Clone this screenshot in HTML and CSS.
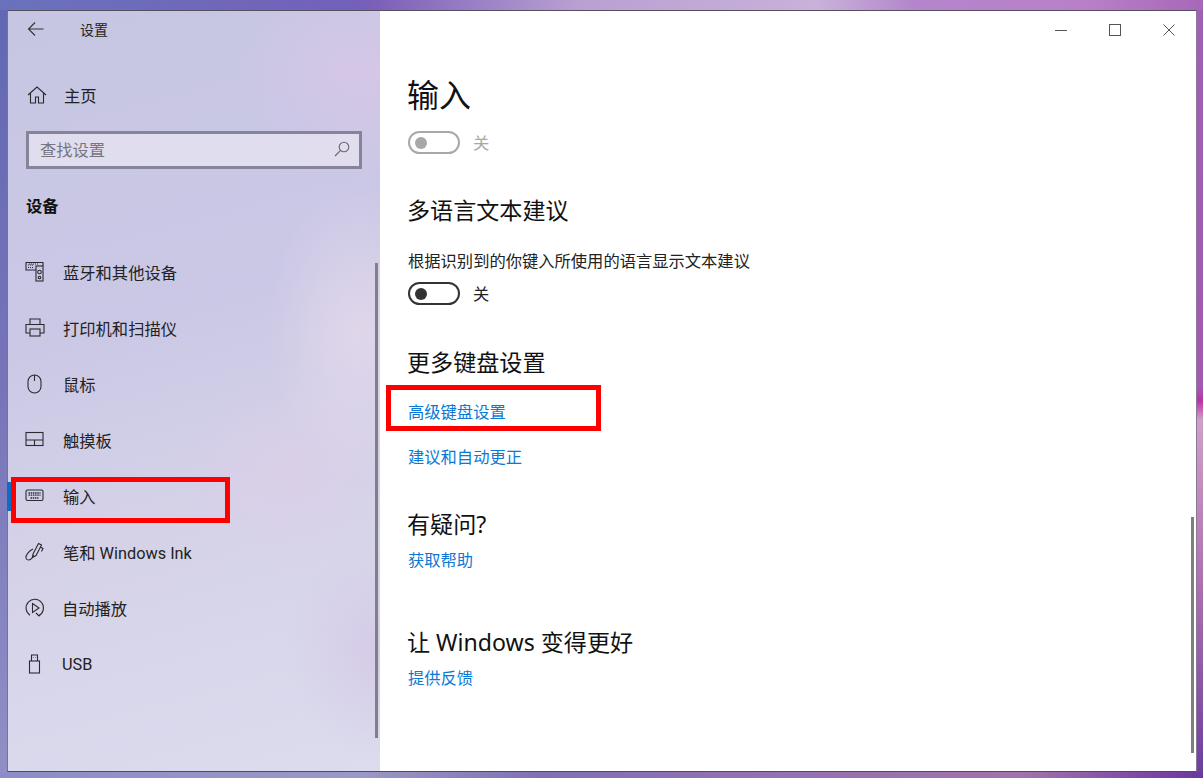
FILE: index.html
```html
<!DOCTYPE html>
<html lang="zh-CN">
<head>
<meta charset="utf-8">
<title>设置</title>
<link rel="stylesheet" href="styles.css">
</head>
<body>
<div class="window">
  <aside class="sidebar">
    <div class="appbar">
      <svg class="back" width="18" height="16" viewBox="0 0 18 16"><path d="M16.500 8H1.500M8 1.500 1.500 8 8 14.500"/></svg>
      <span class="apptitle">设置</span>
    </div>
    <div class="navrow home">
      <svg class="ico" width="20" height="20" viewBox="0 0 20 20"><path d="M1 10 10 2l9 8M3.500 8v10h5v-6h3v6h5V8"/></svg>
      <span>主页</span>
    </div>
    <div class="search">
      <span class="ph">查找设置</span>
      <svg class="ico mag" width="16" height="16" viewBox="0 0 16 16"><circle cx="10" cy="6" r="4.800"/><path d="M6.600 9.400 1 15"/></svg>
    </div>
    <div class="group">设备</div>
    <nav class="nav">
      <div class="navrow">
        <svg class="ico" width="20" height="20" viewBox="0 0 20 20"><path d="M11 8H1V0.500h17V3M18 0.500V4"/><path d="M3 3h5M3 5.500h5M4 2h10" class="thin"/><rect x="11" y="4" width="7" height="15"/><circle cx="14.500" cy="10" r="1.800"/><circle cx="14.500" cy="15.500" r="1.300"/></svg>
        <span>蓝牙和其他设备</span>
      </div>
      <div class="navrow">
        <svg class="ico" width="20" height="20" viewBox="0 0 20 20"><path d="M5 6V1h10v5M5 15H1V6.500h18V15h-4"/><rect x="5" y="11" width="10" height="7"/></svg>
        <span>打印机和扫描仪</span>
      </div>
      <div class="navrow">
        <svg class="ico" width="20" height="20" viewBox="0 0 20 20"><rect x="3" y="1" width="13" height="18" rx="6.500"/><path d="M9.500 1v6"/></svg>
        <span>鼠标</span>
      </div>
      <div class="navrow">
        <svg class="ico" width="20" height="20" viewBox="0 0 20 20"><rect x="1" y="2.500" width="17" height="13"/><path d="M1 10h17M9.500 10v5.500"/></svg>
        <span>触摸板</span>
      </div>
      <div class="navrow active">
        <span class="marker"></span>
        <svg class="ico" width="20" height="20" viewBox="0 0 20 20"><rect x="1" y="4" width="17" height="10.500" rx="1.500"/><path d="M3.500 7h12M3.500 9.200h12M5.500 12h8" class="dash"/></svg>
        <span>输入</span>
      </div>
      <div class="navrow">
        <svg class="ico" width="20" height="20" viewBox="0 0 20 20"><path d="M8 12 13.500 1.500l3 1.500L11 13.500l-3.500 2zM15.500 5l2.500 1.500-1.500 3"/><path d="M8 7C4 9 .5 13 1 16c.4 2.500 4 3 6 0 1-1.500 1.500-3 1.500-3"/></svg>
        <span>笔和 Windows Ink</span>
      </div>
      <div class="navrow">
        <svg class="ico" width="20" height="20" viewBox="0 0 20 20"><path d="M5 17.200A8.700 8.700 0 1 1 14 17.500M11 15l3 3 3-3"/><path d="M7.500 5.500 14 10l-6.500 4.500z"/></svg>
        <span class="nudge">自动播放</span>
      </div>
      <div class="navrow">
        <svg class="ico" width="20" height="20" viewBox="0 0 20 20"><rect x="4.500" y="7" width="10" height="12"/><path d="M6.500 7V1h6v6M8.500 3.500h.5M10.500 3.500h.5"/></svg>
        <span class="nudge">USB</span>
      </div>
    </nav>
  </aside>
  <main class="content">
    <div class="controls">
      <div class="ctl"><svg width="12" height="12" viewBox="0 0 12 12"><path d="M0 6.500h12"/></svg></div>
      <div class="ctl"><svg width="12" height="12" viewBox="0 0 12 12"><rect x=".5" y=".5" width="11" height="11"/></svg></div>
      <div class="ctl"><svg width="12" height="12" viewBox="0 0 12 12"><path d="M.5.500l11 11M11.500.500l-11 11"/></svg></div>
    </div>
    <div class="body">
      <h1>输入</h1>
      <div class="toggle off-disabled"><span class="track"><i></i></span><span class="state">关</span></div>
      <h2 class="h-first">多语言文本建议</h2>
      <p class="desc">根据识别到的你键入所使用的语言显示文本建议</p>
      <div class="toggle"><span class="track"><i></i></span><span class="state">关</span></div>
      <h2 class="h-more">更多键盘设置</h2>
      <a class="link l1">高级键盘设置</a>
      <a class="link l2">建议和自动更正</a>
      <h2 class="h-q">有疑问?</h2>
      <a class="link l3">获取帮助</a>
      <h2 class="h-win">让 Windows 变得更好</h2>
      <a class="link l3">提供反馈</a>
    </div>
  </main>
  <div class="scroll s-left"></div>
  <div class="scroll s-right"></div>
</div>
<div class="redbox r-nav"></div>
<div class="redbox r-link"></div>
</body>
</html>
```
FILE: styles.css
```css
* { box-sizing: border-box; }
html, body { height: 100%; }
body {
  margin: 0;
  padding: 10px 6px 6px 7px;
  overflow: hidden;
  position: relative;
  font-family: "Noto Sans", "Noto Sans CJK SC", sans-serif;
  color: #1a1a1a;
  background-color: #8a70b8;
  background-image:
    linear-gradient(90deg, #6a72bc 0, #7460ba 30%, #7b5fb8 31%, #b8a0d2 48%, #c8b2da 68%, #b485cc 76%, #b980c8 90%, #a868b8 100%),
    linear-gradient(90deg, #8e8cc6 0, #9a98c6 30%, #8070b2 45%, #9070b2 60%, #a272ac 85%, #7a44a2 96%, #6a38a0 100%),
    linear-gradient(180deg, #6068b2 0, #7874ba 50%, #9090c6 100%),
    linear-gradient(180deg, #a060b8 0, #a458b4 50%, #c030a8 51.500%, #d0a0c8 54%, #b070b0 75%, #6a3fa0 100%);
  background-size: 100% 10px, 100% 6px, 7px 100%, 6px 100%;
  background-position: 0 0, 0 100%, 0 0, 100% 0;
  background-repeat: no-repeat;
}
.window {
  position: relative;
  display: flex;
  height: 762px;
  border-top: 1px solid #55505f;
  border-left: 1px solid #75758e;
  border-right: 1px solid #8a7a98;
  border-bottom: 1px solid #4e4a60;
  background: #fff;
}
svg { display: block; fill: none; }
.ico { stroke: #2a2a30; stroke-width: 1.100; flex: none; }
.ico .thin { stroke-width: 1; stroke-dasharray: 1 1; }
.ico .dash { stroke-width: 1.300; stroke-dasharray: 1.500 .700; }

/* sidebar */
.sidebar {
  width: 372px;
  flex: none;
  background:
    radial-gradient(90px 150px at 350px 320px, rgba(233,220,236,.65) 0, rgba(233,220,236,0) 100%),
    radial-gradient(90px 110px at 370px 640px, rgba(212,200,230,.8) 0, rgba(212,200,230,0) 100%),
    radial-gradient(120px 110px at 350px 60px, rgba(216,198,232,.85) 0, rgba(216,198,232,0) 100%),
    radial-gradient(110px 100px at 280px 460px, rgba(222,206,232,.6) 0, rgba(222,206,232,0) 100%),
    linear-gradient(165deg, #c6c6e2 0, #cbc8e6 40%, #d5d2e8 65%, #dcdcee 100%);
}
.appbar { display: flex; align-items: center; height: 37px; padding: 0 0 1px 19px; }
.back { stroke: #333; stroke-width: 1.100; }
.apptitle { font-size: 14px; margin-left: 35px; color: #222; }
.navrow { display: flex; align-items: center; height: 56px; padding-left: 17px; font-family: Roboto, "Noto Sans CJK SC", sans-serif; font-size: 16.300px; position: relative; color: #222; }
.navrow .ico { margin-right: 18px; }
.navrow .nudge { margin-left: -1px; }
.navrow.home { height: 40px; margin-top: 27px; padding-left: 19px; }
.navrow.home .ico { margin-right: 17px; }
.search {
  display: flex;
  align-items: center;
  justify-content: space-between;
  margin: 16px 0 0 18px;
  width: 336px;
  height: 38px;
  padding: 0 9px 3px 11px;
  border: 3px solid #86849a;
  background: rgba(238,234,244,.62);
}
.ph { font-size: 16.300px; color: #77757f; }
.mag { stroke: #666; }
.group { font-size: 16.300px; font-weight: 700; margin: 25px 0 0 18px; line-height: 24px; color: #111; }
.nav { margin-top: 26px; }
.marker { position: absolute; left: -1px; top: 14px; width: 4px; height: 29px; background: #0f6cc4; }

/* content */
.content { flex: 1; min-width: 0; }
.controls { display: flex; justify-content: flex-end; height: 38px; }
.ctl { width: 54px; display: flex; align-items: center; justify-content: center; }
.ctl svg { stroke: #555; stroke-width: 1; }
.body { padding-left: 28px; }
h1 { font-size: 32px; font-weight: 400; line-height: 44px; margin: 24px 0 0 -1px; color: #111; }
h2 { font-size: 23.100px; font-weight: 400; line-height: 32px; margin: 0 0 0 -1px; color: #111; }
.toggle { display: flex; align-items: center; height: 23px; }
.track { display: block; width: 52px; height: 23px; border: 2px solid #333; border-radius: 12px; position: relative; }
.track i { position: absolute; left: 5px; top: 3.500px; width: 12px; height: 12px; border-radius: 50%; background: #333; }
.state { font-size: 16.300px; margin: -2px 0 0 13px; color: #222; }
.off-disabled { margin-top: 14px; }
.off-disabled .track { border-color: #a8a8a8; }
.off-disabled .track i { background: #a8a8a8; }
.off-disabled .state { color: #a8a8a8; }
.h-first { margin-top: 40px; }
.desc { font-size: 16.300px; line-height: 24px; margin: 23px 0 0; color: #222; }
.toggle:not(.off-disabled) { margin-top: 9px; }
.h-more { margin-top: 41px; }
.link { display: block; font-size: 16.300px; line-height: 24px; color: #0a7ad6; }
.l1 { margin-top: 22px; }
.l2 { margin-top: 21px; }
.h-q { margin-top: 39px; }
.l3 { margin-top: 8px; }
.h-win { margin-top: 54px; }

/* overlays */
.scroll { position: absolute; width: 3px; background: #80808a; }
.s-left { left: 367px; top: 252px; height: 475px; }
.s-right { right: 2px; top: 506px; height: 236px; background: #7f7f7f; }
.redbox { position: absolute; border: 5px solid #fe0000; }
.r-nav { left: 11px; top: 477px; width: 219px; height: 46px; }
.r-link { left: 386px; top: 385px; width: 215px; height: 46px; }
```
